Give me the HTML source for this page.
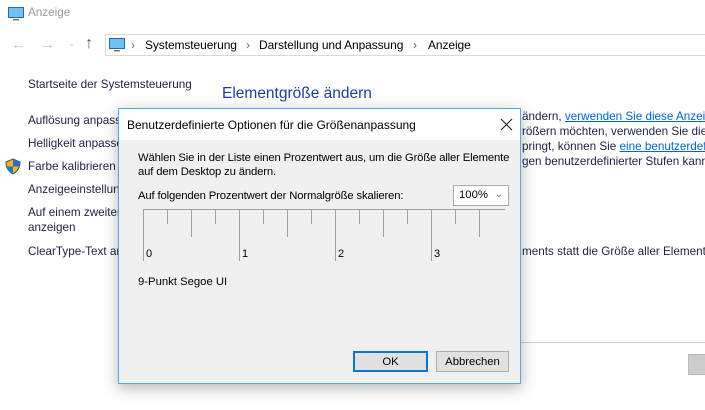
<!DOCTYPE html>
<html><head><meta charset="utf-8"><style>
*{margin:0;padding:0;box-sizing:border-box}
body{width:705px;height:410px;background:#fff;font-family:"Liberation Sans",sans-serif;font-size:11.7px;color:#000;position:relative;overflow:hidden}
.a{position:absolute;white-space:nowrap}
.nav{color:#1e2045}
.lnk{color:#0066cc;text-decoration:underline}
.dlg{position:absolute;left:118px;top:108px;width:403px;height:276px;border:1px solid #5aa7e6;background:#f0f0f0;box-shadow:0 4px 14px rgba(0,0,0,.3);font-size:11.3px}
.tb{position:absolute;left:0;top:0;width:100%;height:31px;background:#fff}
.t{position:absolute;background:#a0a0a0;width:1px;top:101px}
</style></head><body>
<svg class="a" style="left:8px;top:7px" width="16" height="14"><rect x="0.5" y="0.5" width="15" height="10" fill="#6ec1f0" stroke="#1d6fb0"/><rect x="5" y="12" width="6" height="1.5" fill="#777"/></svg>
<div class="a" style="left:28px;top:6px;color:#999">Anzeige</div>
<div class="a" style="left:11px;top:36px;color:#ccc;font-size:15px">&#8592;</div>
<div class="a" style="left:40px;top:36px;color:#ccc;font-size:15px">&#8594;</div>
<div class="a" style="left:68px;top:38px;color:#ccc;font-size:9px">&#8964;</div>
<div class="a" style="left:85px;top:35px;color:#555;font-size:16px">&#8593;</div>
<div class="a" style="left:105px;top:34px;width:610px;height:22px;border:1px solid #d9d9d9"></div>
<svg class="a" style="left:109px;top:38px" width="16" height="14"><rect x="0.5" y="0.5" width="15" height="10" fill="#6ec1f0" stroke="#1d6fb0"/><rect x="5" y="12" width="6" height="1.5" fill="#777"/></svg>
<div class="a" style="left:131px;top:38px;font-size:12px;letter-spacing:-0.1px;width:400px;height:16px"><span style="position:absolute;left:0;color:#666">›</span><span style="position:absolute;left:14px">Systemsteuerung</span><span style="position:absolute;left:115px;color:#666">›</span><span style="position:absolute;left:128px">Darstellung und Anpassung</span><span style="position:absolute;left:282px;color:#666">›</span><span style="position:absolute;left:297px">Anzeige</span></div>
<div class="a nav" style="left:28px;top:78px">Startseite der Systemsteuerung</div>
<div class="a" style="left:222px;top:85px;font-size:15.5px;color:#1e3d99">Elementgröße ändern</div>
<div class="a nav" style="left:28px;top:114px">Auflösung anpassen</div>
<div class="a nav" style="left:28px;top:137px">Helligkeit anpassen</div>
<svg class="a" style="left:5px;top:158px" width="16" height="17"><path d="M8 1 L15 4 Q15 12 8 16 Q1 12 1 4 Z" fill="#f5b800" stroke="#3a4a7a"/><path d="M8 1 L8 8.5 L15 8.5 L15 4 Z M8 8.5 L1 8.5 Q2 13 8 16 Z" fill="#2a6fd0"/></svg>
<div class="a nav" style="left:28px;top:160px">Farbe kalibrieren</div>
<div class="a nav" style="left:28px;top:183px">Anzeigeeinstellungen ändern</div>
<div class="a nav" style="left:28px;top:206px">Auf einem zweiten Bildschirm</div>
<div class="a nav" style="left:28px;top:221px">anzeigen</div>
<div class="a nav" style="left:28px;top:245px">ClearType-Text anpassen</div>
<div class="a" style="left:522px;top:109px;color:#1e2045;line-height:15px">
ändern, <span class="lnk">verwenden Sie diese Anzeige</span><br>
rößern möchten, verwenden Sie die<br>
pringt, können Sie <span class="lnk">eine benutzerdefi</span><br>
gen benutzerdefinierter Stufen kann</div>
<div class="a" style="left:522px;top:245px;color:#1e2045">ments statt die Größe aller Elemente</div>
<div class="a" style="left:480px;top:342px;width:230px;height:1px;background:#ccc"></div>
<div class="a" style="left:688px;top:354px;width:20px;height:21px;background:#ccc;border:1px solid #bbb"></div>
<div class="dlg">
<div class="tb"></div>
<div class="a" style="left:8px;top:9px;font-size:12px">Benutzerdefinierte Optionen für die Größenanpassung</div>
<svg class="a" style="left:381px;top:9px" width="13" height="13"><path d="M1 1L12 12M12 1L1 12" stroke="#222" stroke-width="1.1"/></svg>
<div class="a" style="left:19px;top:42px;line-height:14px;letter-spacing:-0.15px">Wählen Sie in der Liste einen Prozentwert aus, um die Größe aller Elemente<br>auf dem Desktop zu ändern.</div>
<div class="a" style="left:19px;top:81px;letter-spacing:-0.15px">Auf folgenden Prozentwert der Normalgröße skalieren:</div>
<div class="a" style="left:334px;top:76px;width:56px;height:21px;border:1px solid #aaa;background:#fff;padding:3px 0 0 5px">100%<span style="position:absolute;right:5px;top:3px;color:#666;font-size:10px">&#8964;</span></div>
<div class="a" style="left:24px;top:100px;width:362px;height:1px;background:#a0a0a0"></div>
<div class="t" style="left:24px;height:51px"></div>
<div class="t" style="left:120px;height:51px"></div>
<div class="t" style="left:216px;height:51px"></div>
<div class="t" style="left:312px;height:51px"></div>
<div class="t" style="left:48px;height:14px"></div><div class="t" style="left:96px;height:14px"></div>
<div class="t" style="left:144px;height:14px"></div><div class="t" style="left:192px;height:14px"></div>
<div class="t" style="left:240px;height:14px"></div><div class="t" style="left:288px;height:14px"></div>
<div class="t" style="left:336px;height:14px"></div>
<div class="t" style="left:72px;height:27px"></div><div class="t" style="left:168px;height:27px"></div>
<div class="t" style="left:264px;height:27px"></div><div class="t" style="left:360px;height:27px"></div>
<div class="a" style="left:27px;top:139px;font-size:11px">0</div>
<div class="a" style="left:123px;top:139px;font-size:11px">1</div>
<div class="a" style="left:219px;top:139px;font-size:11px">2</div>
<div class="a" style="left:315px;top:139px;font-size:11px">3</div>
<div class="a" style="left:19px;top:167px">9-Punkt Segoe UI</div>
<div class="a" style="left:234px;top:242px;width:75px;height:21px;border:2px solid #0078d7;background:#e1e1e1;text-align:center;padding-top:3px">OK</div>
<div class="a" style="left:317px;top:242px;width:73px;height:21px;border:1px solid #adadad;background:#e1e1e1;text-align:center;padding-top:4px">Abbrechen</div>
</div>
</body></html>
